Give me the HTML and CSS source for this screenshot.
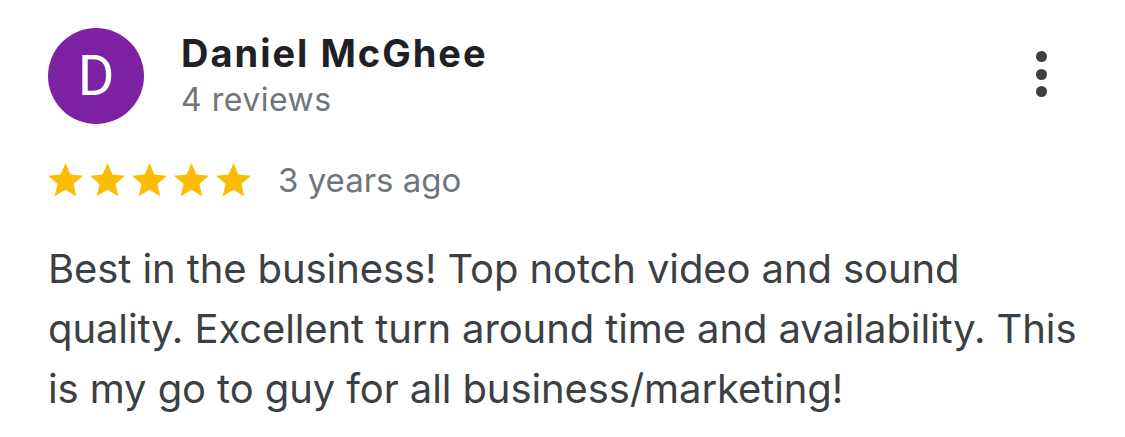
FILE: index.html
```html
<!DOCTYPE html>
<html lang="en">
<head>
<meta charset="utf-8">
<title>Review</title>
<link rel="stylesheet" href="styles.css">
</head>
<body>
<div class="review">
  <div class="header">
    <div class="avatar">D</div>
    <div class="author">
      <div class="name">Daniel McGhee</div>
      <div class="count">4 reviews</div>
    </div>
    <div class="kebab" aria-label="More options">
      <span class="dot"></span><span class="dot"></span><span class="dot"></span>
    </div>
  </div>
  <div class="rating">
    <div class="stars">
      <svg class="star" viewBox="2 2 20 19"><path d="M12 17.27L18.18 21l-1.64-7.03L22 9.24l-7.19-.61L12 2 9.19 8.63 2 9.24l5.46 4.73L5.82 21z"/></svg>
      <svg class="star" viewBox="2 2 20 19"><path d="M12 17.27L18.18 21l-1.64-7.03L22 9.24l-7.19-.61L12 2 9.19 8.63 2 9.24l5.46 4.73L5.82 21z"/></svg>
      <svg class="star" viewBox="2 2 20 19"><path d="M12 17.27L18.18 21l-1.64-7.03L22 9.24l-7.19-.61L12 2 9.19 8.63 2 9.24l5.46 4.73L5.82 21z"/></svg>
      <svg class="star" viewBox="2 2 20 19"><path d="M12 17.27L18.18 21l-1.64-7.03L22 9.24l-7.19-.61L12 2 9.19 8.63 2 9.24l5.46 4.73L5.82 21z"/></svg>
      <svg class="star" viewBox="2 2 20 19"><path d="M12 17.27L18.18 21l-1.64-7.03L22 9.24l-7.19-.61L12 2 9.19 8.63 2 9.24l5.46 4.73L5.82 21z"/></svg>
    </div>
    <span class="date">3 years ago</span>
  </div>
  <p class="text">Best in the business! Top notch video and sound quality. Excellent turn around time and availability. This is my go to guy for all business/marketing!</p>
</div>
</body>
</html>
```

FILE: styles.css
```css
* { box-sizing: border-box; }
html, body { margin: 0; padding: 0; background: #ffffff; }
body {
  width: 1125px;
  height: 437px;
  overflow: hidden;
  font-family: Inter, "Liberation Sans", Arial, sans-serif;
}
.review {
  padding: 28px 30px 0 48px;
}
.header {
  display: flex;
  align-items: flex-start;
}
.avatar {
  width: 96px;
  height: 96px;
  border-radius: 50%;
  background: #7e22a4;
  color: #ffffff;
  display: flex;
  align-items: center;
  justify-content: center;
  font-family: Roboto, "Liberation Sans", sans-serif;
  font-size: 56px;
  font-weight: 400;
  line-height: 1;
  flex-shrink: 0;
}
.author {
  margin-left: 37px;
  margin-top: 3px;
  display: flex;
  flex-direction: column;
  gap: 4.8px;
}
.name {
  font-size: 38px;
  line-height: 44px;
  font-weight: 700;
  letter-spacing: 2px;
  color: #202124;
}
.count {
  font-size: 32px;
  line-height: 40px;
  letter-spacing: 0.5px;
  color: #70757a;
}
.kebab {
  margin-left: auto;
  margin-right: 42px;
  margin-top: 23px;
  width: 24px;
  display: flex;
  flex-direction: column;
  align-items: center;
  gap: 6.5px;
}
.dot {
  width: 11px;
  height: 11px;
  border-radius: 50%;
  background: #3c4043;
}
.rating {
  margin-top: 36px;
  display: flex;
  align-items: center;
  height: 40px;
}
.stars {
  display: flex;
  gap: 7px;
}
.star {
  width: 35px;
  height: 33.25px;
  fill: #fbbc04;
  display: block;
}
.date {
  margin-left: 27px;
  font-size: 33px;
  line-height: 40px;
  color: #70757a;
}
.text {
  margin: 39px 0 0 0;
  font-size: 40px;
  line-height: 60px;
  letter-spacing: -0.1px;
  color: #3c4043;
}
```
